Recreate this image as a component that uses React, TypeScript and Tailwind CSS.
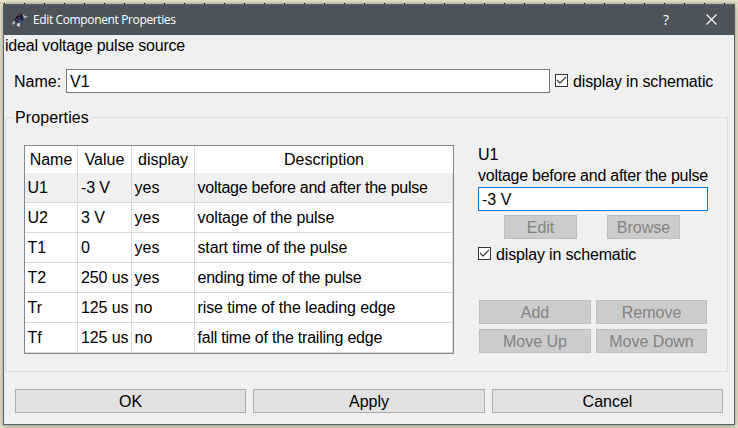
import type { ReactNode } from "react";

const rows = [
  ["U1", "-3 V", "yes", "voltage before and after the pulse"],
  ["U2", "3 V", "yes", "voltage of the pulse"],
  ["T1", "0", "yes", "start time of the pulse"],
  ["T2", "250 us", "yes", "ending time of the pulse"],
  ["Tr", "125 us", "no", "rise time of the leading edge"],
  ["Tf", "125 us", "no", "fall time of the trailing edge"],
];

const descriptionTracking = [
  "tracking-[-0.24px]",
  "tracking-[-0.1px]",
  "tracking-[-0.14px]",
  "tracking-[-0.25px]",
  "tracking-[-0.11px]",
  "tracking-[-0.22px]",
];

const GRID = "grid grid-cols-[53px_54px_63px_258px]";

function Check({ children }: { children: ReactNode }) {
  return (
    <label className="flex h-6 items-start gap-[5px]">
      <svg width="13" height="13" viewBox="0 0 13 13" className="mt-[5px] shrink-0">
        <rect x="0.5" y="0.5" width="12" height="12" fill="#fff" stroke="#333" />
        <path d="M2 6L5 9L11 3" fill="none" stroke="#444" strokeWidth="1.3" />
      </svg>
      <span className="pt-1 tracking-[-0.15px]">{children}</span>
    </label>
  );
}

function Button({ children, className = "", disabled = false }: { children: ReactNode; className?: string; disabled?: boolean }) {
  return (
    <button
      disabled={disabled}
      className={`flex h-6 items-center justify-center border pt-[2px] ${
        disabled ? "border-[#bfbfbf] bg-[#cccccc] text-[#838383]" : "border-[#adadad] bg-[#e1e1e1] text-black"
      } ${className}`}
    >
      {children}
    </button>
  );
}

export default function App() {
  return (
    <div className="h-[428px] w-[738px] overflow-hidden bg-[#e9e4cb] font-['Liberation_Sans',Arial,sans-serif] text-[16px] leading-[18px] text-black">
      <div className="h-1 bg-linear-to-b from-[#ebe6cd] to-[#d3ceb7]">
        <svg width="738" height="4" shapeRendering="crispEdges">
          {Array.from({ length: 37 }, (_, i) => (
            <rect key={i} x={4 + i * 20} y="3" width="1" height="1" fill="#000" />
          ))}
        </svg>
      </div>
      <div className="ml-[3px] flex h-[421px] w-[732px] flex-col border border-[#56646b] bg-[#f0f0f0] shadow-[0_1px_5px_rgba(0,0,0,0.4)]">
        <div className="flex h-[30px] shrink-0 items-center bg-[#4c545a] pl-2 text-white">
          <svg width="17" height="15" viewBox="0 0 17 15" className="shrink-0">
            <path d="M4 4L7 1L11 2L11 7L9 10L5 9L2 8Z" fill="#1c1725" />
            <path d="M6 4L9 4L10 8L8 11L5 8Z" fill="#2e3560" />
            <path d="M6 2L8 3M5 6L4 8" stroke="#70474d" strokeWidth="1.2" />
            <path d="M11 2L13 4L15.500 3.500M12 4L13 5M3 8L1 10M0 11L3 10.500M7 10L5 13" stroke="#b9bdd2" strokeWidth="1.2" fill="none" />
            <path d="M5 11L8 10L7.500 14L6 13Z" fill="#d8dbe8" />
            <path d="M8 7L9 10" stroke="#3f75a8" strokeWidth="1.2" />
          </svg>
          <span className="ml-1 w-[600px] font-['Open_Sans','Noto_Sans',sans-serif] text-[12px] tracking-[-0.37px]">Edit Component Properties</span>
          <span className="ml-[29px] w-2 text-center font-['Open_Sans','Noto_Sans',sans-serif] text-[14px]">?</span>
          <svg width="11" height="11" viewBox="0 0 11 11" className="mb-[2px] ml-9 shrink-0">
            <path d="M0.5 0.5L10.5 10.5M10.5 0.5L0.5 10.5" stroke="#fff" strokeWidth="1.1" />
          </svg>
        </div>
        <div className="h-[34px] shrink-0 pt-[2px] pl-[1px] tracking-[-0.19px]">ideal voltage pulse source</div>
        <div className="flex h-6 shrink-0 items-center pl-[10px]">
          <span className="w-[52px] pt-[2px]">Name:</span>
          <input readOnly defaultValue="V1" className="h-6 w-[484px] border border-[#7a7a7a] bg-white px-[3px] pt-[2px] outline-none" />
          <div className="ml-[5px]">
            <Check>display in schematic</Check>
          </div>
        </div>
        <div className="relative mt-6 ml-px flex h-[255px] w-[723px] shrink-0 border border-[#dcdcdc] pt-[27px] pl-[18px]">
          <span className="absolute -top-[9px] left-[7px] bg-[#f0f0f0] px-[2px] tracking-[0.1px]">Properties</span>
          <div className="h-[209px] w-[430px] border border-[#828790] bg-white">
            <div className={`${GRID} h-[27px]`}>
              {["Name", "Value", "display", "Description"].map((h, i) => (
                <div key={h} className={`flex items-center justify-center border-[#d8d8d8] pt-px ${i < 3 ? "border-r" : ""}`}>
                  {h}
                </div>
              ))}
            </div>
            {rows.map((row, i) => (
              <div key={row[0]} className={`${GRID} h-[30px] ${i === 0 ? "bg-[#f0f0f0]" : ""}`}>
                {row.map((cell, j) => (
                  <div
                    key={j}
                    className={`flex items-center border-r border-b border-[#d8d8d8] whitespace-nowrap ${
                      j === 3 ? `pl-[2.5px] ${descriptionTracking[i]}` : j === 1 ? "pl-[3px] tracking-[-0.1px]" : "pl-[2.5px]"
                    }`}
                  >
                    {cell}
                  </div>
                ))}
              </div>
            ))}
          </div>
          <div className="ml-6 w-[230px]">
            <div className="h-[21px] pt-px">U1</div>
            <div className="h-[21px] pt-px tracking-[-0.25px] whitespace-nowrap">voltage before and after the pulse</div>
            <input readOnly defaultValue="-3 V" className="block h-6 w-[230px] border border-[#0078d7] bg-white px-[3px] pt-[2px] outline-none" />
            <div className="mt-1 flex gap-[30px] pl-[26px]">
              <Button disabled className="w-[73px]">Edit</Button>
              <Button disabled className="w-[73px]">Browse</Button>
            </div>
            <div className="mt-[3px]">
              <Check>display in schematic</Check>
            </div>
            <div className="mt-[34px] ml-px grid grid-cols-[112px_111px] gap-[5px]">
              <Button disabled>Add</Button>
              <Button disabled>Remove</Button>
              <Button disabled>Move Up</Button>
              <Button disabled>Move Down</Button>
            </div>
          </div>
        </div>
        <div className="mt-[17px] ml-[11px] flex gap-[7px]">
          <Button className="w-[231px]">OK</Button>
          <Button className="w-[232px]">Apply</Button>
          <Button className="w-[231px]">Cancel</Button>
        </div>
      </div>
    </div>
  );
}
